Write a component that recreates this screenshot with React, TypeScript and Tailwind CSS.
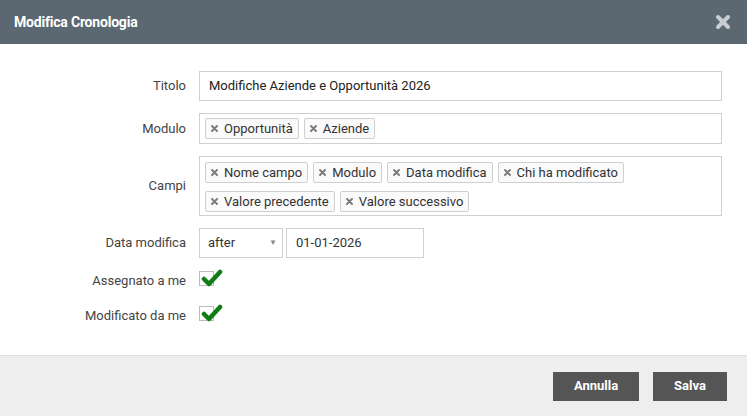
import React from 'react';

const Tag = ({ label }: { label: string }) => (
  <span className="inline-flex items-center h-[21px] pl-[5px] pr-[5px] gap-[6px] border border-[#cfcfcf] rounded-[2px] bg-[#fafafa] text-[13px] text-[#333]">
    <svg width="7" height="7" viewBox="0 0 7 7">
      <path d="M1 1 L6 6 M6 1 L1 6" stroke="#777" strokeWidth="1.8" strokeLinecap="round" />
    </svg>
    {label}
  </span>
);

const Check = () => (
  <div className="relative w-[26px] h-[20px]">
    <div className="absolute left-0 top-0 w-[15px] h-[15px] border border-[#bbb] bg-white" />
    <svg className="absolute left-[2px] top-[-3px]" width="24" height="20" viewBox="0 0 24 20">
      <path d="M3 11 L8 16 L19 4" fill="none" stroke="#107c14" strokeWidth="4.5" strokeLinecap="round" strokeLinejoin="round" />
    </svg>
  </div>
);

const Row = ({ label, children, h }: { label: string; children: React.ReactNode; h: string }) => (
  <div className={`flex items-center ${h}`}>
    <div className="w-[187px] pr-[1px] text-right text-[13px] text-[#444]">{label}</div>
    <div className="ml-[12px] flex-1 flex items-center h-full">{children}</div>
  </div>
);

export default function App() {
  return (
    <div className="w-[747px] h-[416px] flex flex-col bg-white" style={{ fontFamily: 'Roboto, "Liberation Sans", sans-serif' }}>
      <div className="h-[44px] bg-[#5b6872] flex items-center justify-between pl-[14px] pr-[16px]">
        <span className="text-white font-bold text-[14px] tracking-[-0.2px]">Modifica Cronologia</span>
        <svg width="16" height="16" viewBox="0 0 16 16">
          <path d="M3 3 L13 13 M13 3 L3 13" stroke="#c9ced3" strokeWidth="4" strokeLinecap="round" />
        </svg>
      </div>
      <div className="flex-1 flex flex-col pt-[27px] pr-[25px] gap-[12px]">
        <Row label="Titolo" h="h-[30px]">
          <div className="w-full h-full border border-[#d0d0d0] flex items-center px-[9px] text-[13px] text-[#222]">
            Modifiche Aziende e Opportunità 2026
          </div>
        </Row>
        <Row label="Modulo" h="h-[31px]">
          <div className="w-full h-full border border-[#d0d0d0] flex items-center px-[5px] gap-[5px]">
            <Tag label="Opportunità" />
            <Tag label="Aziende" />
          </div>
        </Row>
        <Row label="Campi" h="h-[60px]">
          <div className="w-full h-full border border-[#d0d0d0] px-[5px] pt-[5px] flex flex-wrap content-start gap-x-[5px] gap-y-[8px]">
            <Tag label="Nome campo" />
            <Tag label="Modulo" />
            <Tag label="Data modifica" />
            <Tag label="Chi ha modificato" />
            <Tag label="Valore precedente" />
            <Tag label="Valore successivo" />
          </div>
        </Row>
        <Row label="Data modifica" h="h-[30px]">
          <div className="flex h-full gap-[3px]">
            <div className="w-[84px] h-full border border-[#d0d0d0] flex items-center justify-between pl-[8px] pr-[5px] text-[13px] text-[#333]">
              after
              <span className="text-[8px] text-[#888]">▼</span>
            </div>
            <div className="w-[138px] h-full border border-[#d0d0d0] flex items-center px-[9px] text-[13px] text-[#333]">
              01-01-2026
            </div>
          </div>
        </Row>
        <div className="flex flex-col gap-[15px] pt-[1px]">
          <Row label="Assegnato a me" h="h-[20px]">
            <Check />
          </Row>
          <Row label="Modificato da me" h="h-[20px]">
            <Check />
          </Row>
        </div>
      </div>
      <div className="h-[61px] bg-[#eeeeee] border-t border-[#dedede] flex items-center justify-end pr-[20px] gap-[14px]">
        <button className="w-[86px] h-[29px] bg-[#555] text-white font-bold text-[13px]">Annulla</button>
        <button className="w-[74px] h-[29px] bg-[#555] text-white font-bold text-[13px]">Salva</button>
      </div>
    </div>
  );
}
